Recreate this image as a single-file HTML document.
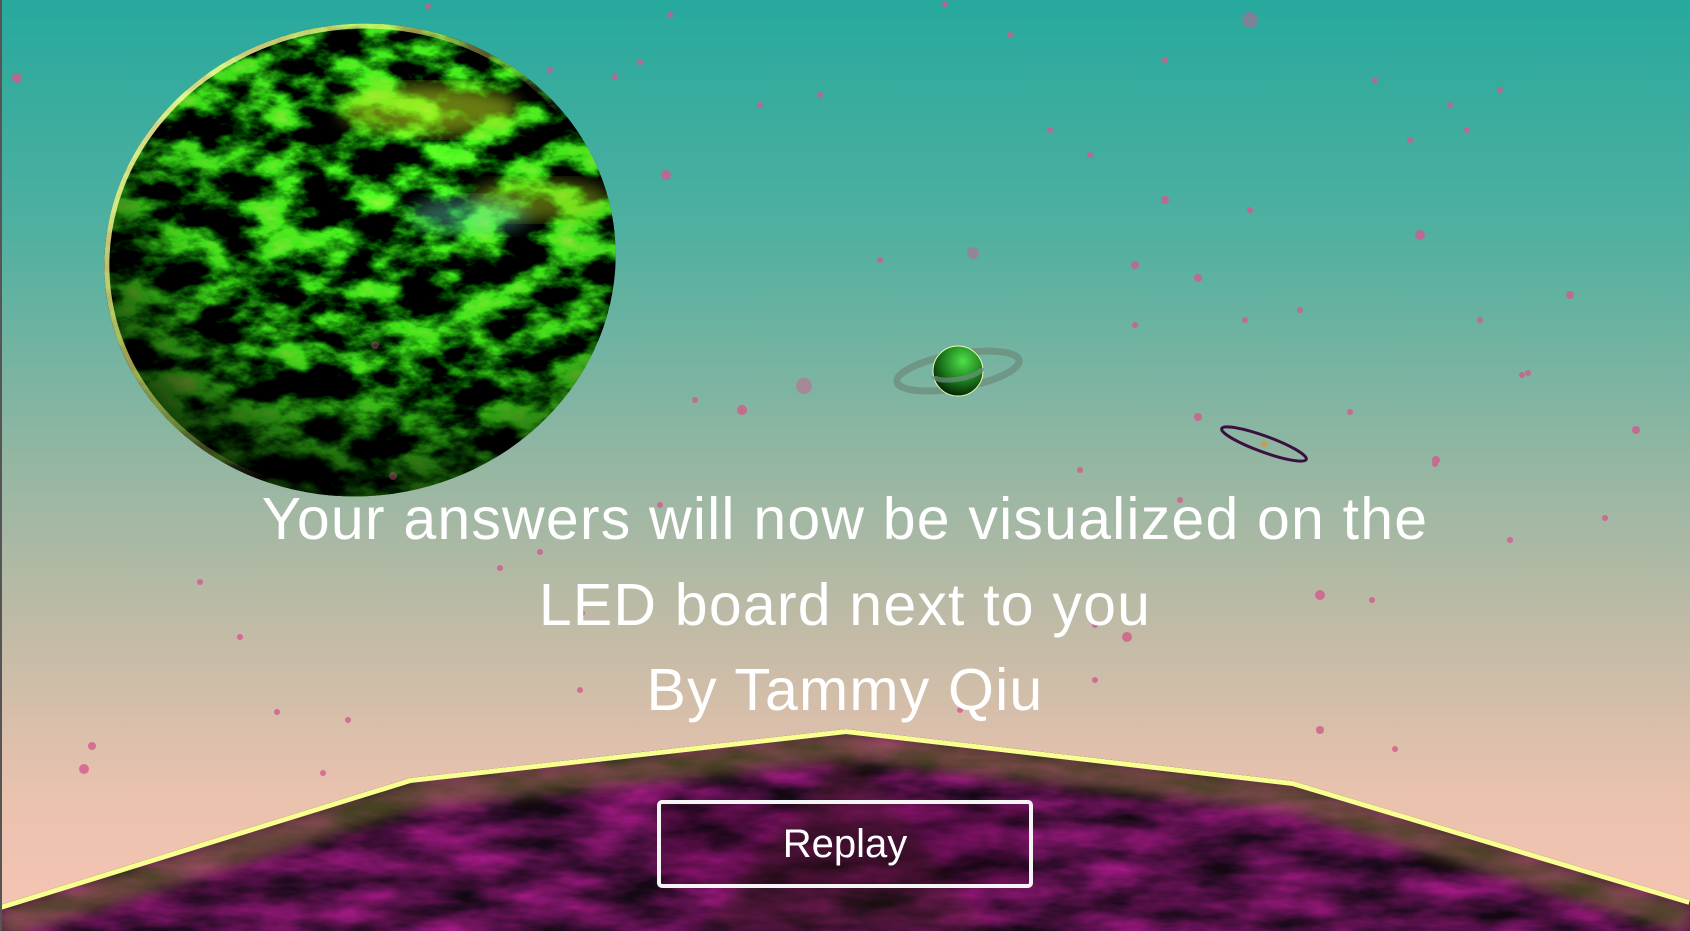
<!DOCTYPE html>
<html><head><meta charset="utf-8"><style>
html,body{margin:0;padding:0;width:1690px;height:931px;overflow:hidden}
body{background:linear-gradient(180deg,#27a99e 0%,#50b0a0 25%,#8fb6a2 48%,#c2bba6 68%,#e9c2ae 85%,#f8c4b3 100%);position:relative;font-family:"Liberation Sans",sans-serif}
.txt{position:absolute;left:0;width:1690px;text-align:center;color:#fff;font-size:59px;font-weight:normal;letter-spacing:1.2px}
.btn{position:absolute;left:657px;top:800px;width:368px;height:80px;border:4px solid #f4f4f4;border-radius:5px;color:#fff;font-size:40px;text-align:center;line-height:80px;background:rgba(60,0,40,0.2)}
</style></head><body>
<svg width="1690" height="931" style="position:absolute;left:0;top:0">
<defs>
<filter id="tex" x="0" y="0" width="100%" height="100%" color-interpolation-filters="sRGB">
<feTurbulence type="fractalNoise" baseFrequency="0.02 0.035" numOctaves="5" seed="7"/>
<feColorMatrix type="matrix" values="1.5 0 0 0 -0.7  4 0 0 0 -1.6  0.6 0 0 0 -0.28  0 0 0 0 1"/>
</filter>
<filter id="tex2" x="0" y="0" width="100%" height="100%" color-interpolation-filters="sRGB">
<feTurbulence type="fractalNoise" baseFrequency="0.012 0.04" numOctaves="4" seed="3"/>
<feColorMatrix type="matrix" values="1.3 0 0 0 -0.3  0.15 0 0 0 0  1 0 0 0 -0.2  0 0 0 0 1"/>
</filter>
<clipPath id="pc"><ellipse cx="360" cy="260" rx="256" ry="236" transform="rotate(-8 360 260)"/></clipPath>
<radialGradient id="shade" cx="0.6" cy="0.3" r="0.75">
<stop offset="0" stop-color="#000" stop-opacity="0"/>
<stop offset="0.6" stop-color="#000" stop-opacity="0.15"/>
<stop offset="1" stop-color="#000" stop-opacity="0.85"/>
</radialGradient>
<linearGradient id="rim" x1="0" y1="0" x2="1" y2="1">
<stop offset="0" stop-color="#ffffc0" stop-opacity="1"/>
<stop offset="0.35" stop-color="#ffff80" stop-opacity="0.6"/>
<stop offset="0.6" stop-color="#ffff80" stop-opacity="0"/>
</linearGradient>
<clipPath id="bc"><polygon points="0,905 410,778 846,729 1293,781 1690,900 1690,931 0,931"/></clipPath>
<radialGradient id="sat" cx="0.6" cy="0.3" r="0.7"><stop offset="0" stop-color="#4ee04a"/><stop offset="0.6" stop-color="#1c7a1c"/><stop offset="1" stop-color="#052805"/></radialGradient>
<filter id="bl"><feGaussianBlur stdDeviation="8"/></filter>
<filter id="bl2"><feGaussianBlur stdDeviation="6"/></filter>
</defs>
<g clip-path="url(#pc)">
<rect x="100" y="20" width="520" height="480" fill="#052805"/>
<rect x="100" y="20" width="520" height="480" filter="url(#tex)"/>
<ellipse cx="430" cy="110" rx="90" ry="25" fill="#c8f020" opacity="0.55" filter="url(#bl)"/>
<ellipse cx="540" cy="200" rx="70" ry="20" fill="#c8f020" opacity="0.45" filter="url(#bl)"/>
<ellipse cx="470" cy="215" rx="60" ry="18" fill="#6ff0c8" opacity="0.4" filter="url(#bl)"/>
<rect x="100" y="20" width="520" height="480" fill="url(#shade)"/>
<ellipse cx="360" cy="260" rx="256" ry="236" transform="rotate(-8 360 260)" fill="none" stroke="url(#rim)" stroke-width="10"/>
</g>
<ellipse cx="958" cy="371" rx="62" ry="17" transform="rotate(-10 958 371)" fill="none" stroke="#6e9080" stroke-width="7" opacity="0.85"/>
<circle cx="958" cy="371" r="25" fill="url(#sat)" stroke="#e8ffb0" stroke-width="1"/>
<path d="M934,376 A24,7 -10 0 0 982,368" fill="none" stroke="#6e9080" stroke-width="5" opacity="0.7"/>
<ellipse cx="1264" cy="444" rx="45" ry="8" transform="rotate(20 1264 444)" fill="none" stroke="#3a1040" stroke-width="3"/>
<circle cx="1264" cy="444" r="3.5" fill="#c0a060"/>
<g clip-path="url(#bc)">
<rect x="0" y="720" width="1690" height="211" fill="#4a0a3c"/>
<rect x="0" y="720" width="1690" height="211" filter="url(#tex2)" opacity="0.7"/>
<polygon points="846,745 700,931 990,931" fill="#2a1a10" opacity="0.35" filter="url(#bl2)"/>
<polyline points="0,925 410,795 846,745 1293,797 1690,920" fill="none" stroke="#7a7a30" stroke-width="30" opacity="0.5" filter="url(#bl2)"/>
<polyline points="0,905 410,778 846,729 1293,781 1690,900" fill="none" stroke="#f6ff90" stroke-width="10"/>
</g>
<g fill="#d25a8c" opacity="0.8">
<circle cx="17" cy="78" r="5"/><circle cx="1250" cy="20" r="8" opacity="0.6"/><circle cx="428" cy="6" r="3"/><circle cx="670" cy="15" r="3"/>
<circle cx="1010" cy="35" r="3"/><circle cx="945" cy="4" r="3"/><circle cx="640" cy="62" r="3"/><circle cx="615" cy="77" r="3"/>
<circle cx="550" cy="70" r="3"/><circle cx="666" cy="175" r="5"/><circle cx="760" cy="105" r="3"/><circle cx="820" cy="95" r="3"/>
<circle cx="1165" cy="200" r="4"/><circle cx="1420" cy="235" r="5"/><circle cx="1250" cy="210" r="3"/><circle cx="973" cy="253" r="6" opacity="0.6"/>
<circle cx="880" cy="260" r="3"/><circle cx="1135" cy="265" r="4"/><circle cx="1198" cy="278" r="4"/><circle cx="1570" cy="295" r="4"/>
<circle cx="1135" cy="325" r="3"/><circle cx="1245" cy="320" r="3"/><circle cx="1300" cy="310" r="3"/><circle cx="1480" cy="320" r="3"/>
<circle cx="804" cy="386" r="8" opacity="0.6"/><circle cx="742" cy="410" r="5"/><circle cx="695" cy="400" r="3"/><circle cx="1198" cy="417" r="4"/>
<circle cx="1436" cy="460" r="4"/><circle cx="1636" cy="430" r="4"/><circle cx="1528" cy="373" r="3"/><circle cx="1522" cy="375" r="3"/>
<circle cx="1435" cy="464" r="3"/><circle cx="1350" cy="412" r="3"/><circle cx="500" cy="568" r="3"/><circle cx="540" cy="552" r="3"/>
<circle cx="200" cy="582" r="3"/><circle cx="1320" cy="595" r="5"/><circle cx="1372" cy="600" r="3"/><circle cx="1127" cy="637" r="5"/>
<circle cx="582" cy="613" r="3"/><circle cx="277" cy="712" r="3"/><circle cx="348" cy="720" r="3"/><circle cx="92" cy="746" r="4"/>
<circle cx="84" cy="769" r="5"/><circle cx="323" cy="773" r="3"/><circle cx="1320" cy="730" r="4"/><circle cx="1395" cy="749" r="3"/>
<circle cx="393" cy="476" r="4" opacity="0.5"/><circle cx="375" cy="345" r="4" opacity="0.5"/><circle cx="1605" cy="518" r="3"/><circle cx="1410" cy="140" r="3"/>
<circle cx="1467" cy="130" r="3"/><circle cx="1450" cy="105" r="3"/><circle cx="1375" cy="80" r="3"/><circle cx="1165" cy="60" r="3"/>
<circle cx="1050" cy="130" r="3"/><circle cx="1090" cy="155" r="3"/><circle cx="1500" cy="90" r="3"/><circle cx="1510" cy="540" r="3"/>
<circle cx="660" cy="505" r="3"/><circle cx="1080" cy="470" r="3"/><circle cx="1180" cy="500" r="3"/><circle cx="1095" cy="625" r="3"/>
<circle cx="240" cy="637" r="3"/><circle cx="1095" cy="680" r="3"/><circle cx="580" cy="690" r="3"/><circle cx="960" cy="710" r="3"/>
</g>
</svg>
<div class="txt" style="top:485px">Your answers will now be visualized on the</div>
<div class="txt" style="top:571px">LED board next to you</div>
<div class="txt" style="top:656px">By Tammy Qiu</div>
<div class="btn">Replay</div>
<div style="position:absolute;left:0;top:0;width:2px;height:931px;background:#555"></div>
</body></html>
